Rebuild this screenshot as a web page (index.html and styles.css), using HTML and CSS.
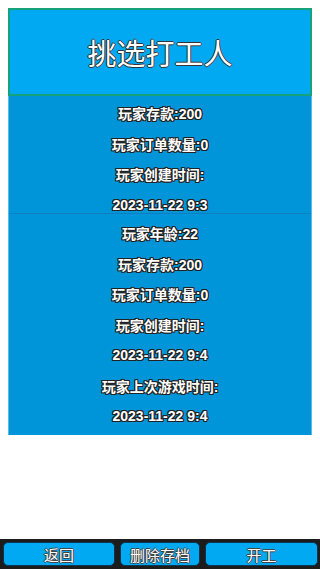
FILE: index.html
```html
<!DOCTYPE html>
<html lang="zh">
<head>
<meta charset="utf-8">
<link rel="stylesheet" href="styles.css">
</head>
<body>
<div class="page">
  <div class="content">
    <header class="title-box"><h1 class="title">挑选打工人</h1></header>
    <div class="panel">
      <section class="card card-clip">
        <div class="row">玩家存款:200</div>
        <div class="row">玩家订单数量:0</div>
        <div class="row">玩家创建时间:</div>
        <div class="row">2023-11-22 9:3</div>
      </section>
      <section class="card card-full">
        <div class="row">玩家年龄:22</div>
        <div class="row">玩家存款:200</div>
        <div class="row">玩家订单数量:0</div>
        <div class="row">玩家创建时间:</div>
        <div class="row">2023-11-22 9:4</div>
        <div class="row">玩家上次游戏时间:</div>
        <div class="row">2023-11-22 9:4</div>
      </section>
    </div>
  </div>
  <footer class="bar">
    <button class="btn btn-back">返回</button>
    <button class="btn btn-del">删除存档</button>
    <button class="btn btn-go">开工</button>
  </footer>
</div>
</body>
</html>
```
FILE: styles.css
```css
* { box-sizing: border-box; }
html, body { margin: 0; padding: 0; background: #ffffff; }
body {
  font-family: "Liberation Sans", "Noto Sans CJK SC", sans-serif;
}
.page {
  height: 569px;
  display: flex;
  flex-direction: column;
}
.content {
  flex: 1;
  padding: 8px 8px 0 8px;
}
.title-box {
  height: 88px;
  background: #00a9f1;
  border: 2px solid #16a27a;
  display: flex;
  align-items: center;
  justify-content: center;
}
.title {
  margin: 0;
  font-family: "Noto Sans CJK SC", sans-serif;
  font-size: 29px;
  font-weight: 400;
  color: #ffffff;
  line-height: 1;
  text-shadow: 1px 0 0 #333, -1px 0 0 #333, 0 1px 0 #333, 0 -1px 0 #333;
}
.panel {
  height: 339px;
  background: #0095d8;
  border-left: 1px solid #5ab9e6;
  border-right: 1px solid #5ab9e6;
  display: flex;
  flex-direction: column;
}
.card { overflow: hidden; }
.card-clip {
  height: 118px;
  padding-top: 2px;
  border-bottom: 1px solid #0a80c0;
}
.card-full {
  flex: 1;
  padding-top: 4px;
}
.row {
  height: 30.5px;
  display: flex;
  align-items: center;
  justify-content: center;
  color: #ffffff;
  font-size: 14px;
  font-weight: 700;
  text-shadow: 1px 0 0 #222, -1px 0 0 #222, 0 1px 0 #222, 0 -1px 0 #222,
               1px 1px 0 #222, -1px -1px 0 #222, 1px -1px 0 #222, -1px 1px 0 #222;
}
.bar {
  height: 30px;
  background: #1c1c1c;
  display: flex;
  gap: 5px;
  padding: 3px 2px 3px 3px;
}
.btn {
  height: 24px;
  background: #00a9f1;
  border: 1px solid #0b3550;
  border-radius: 5px;
  font-family: "Noto Sans CJK SC", sans-serif;
  font-size: 15px;
  color: #ffffff;
  padding: 0;
  line-height: 1;
  text-shadow: 1px 0 0 #444, -1px 0 0 #444, 0 1px 0 #444, 0 -1px 0 #444;
}
.btn-back { width: 112px; }
.btn-del { width: 80px; }
.btn-go { width: 113px; }
```
